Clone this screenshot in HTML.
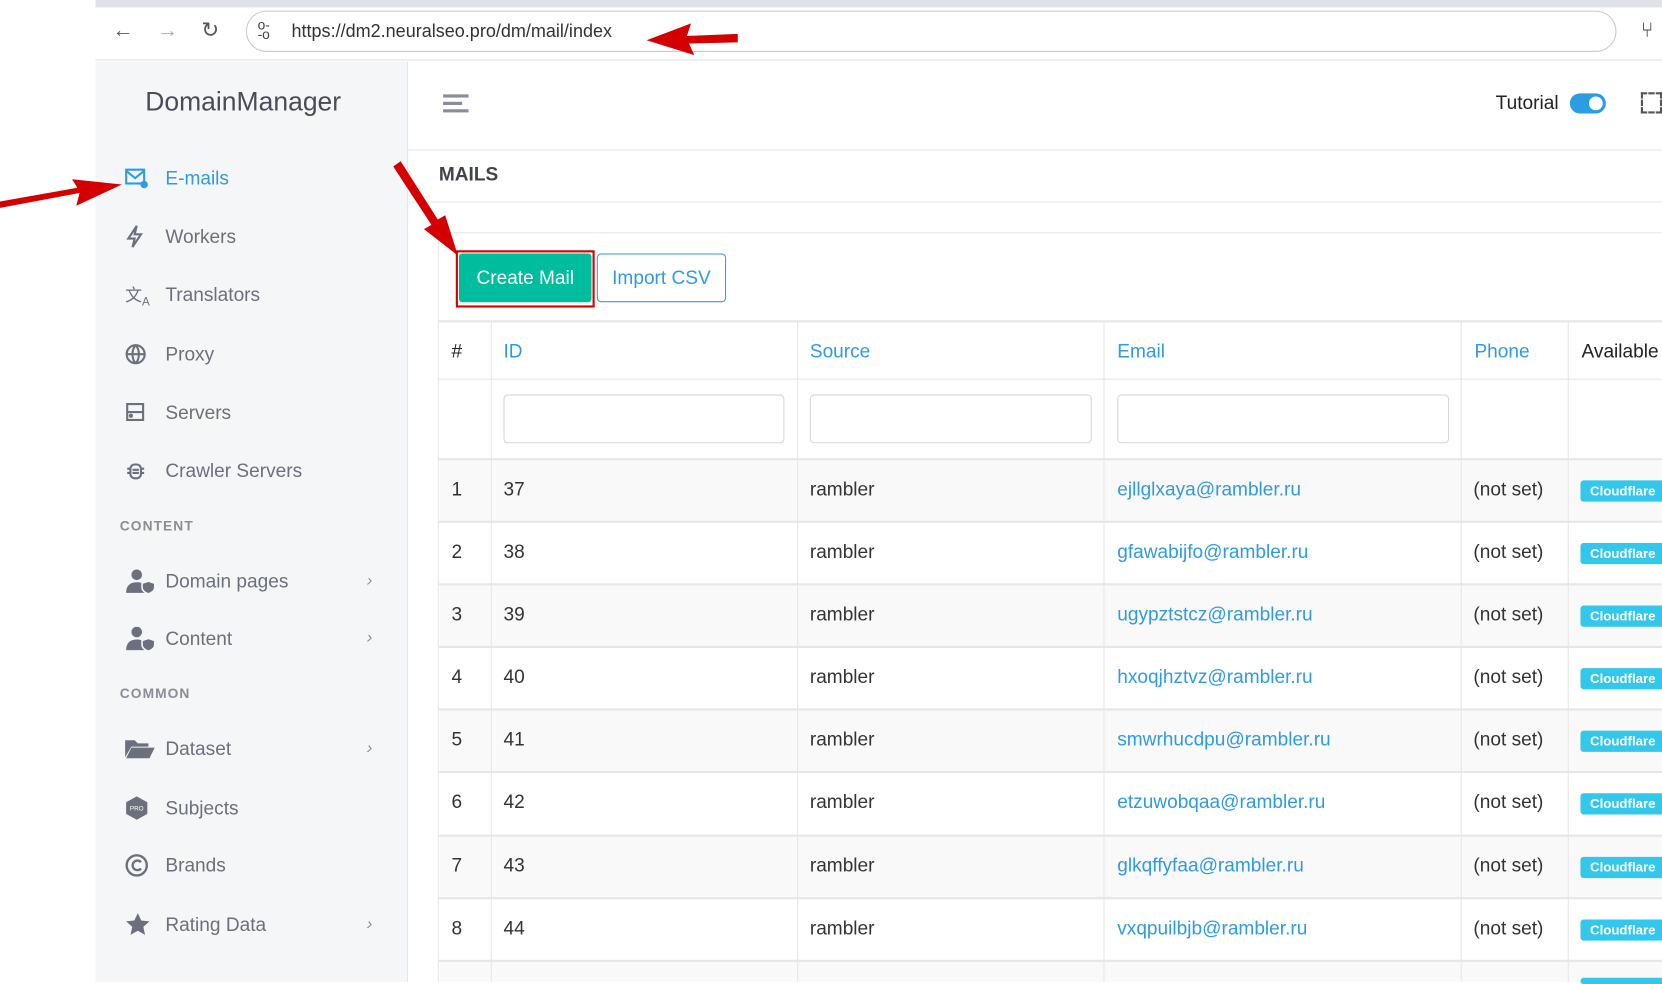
<!DOCTYPE html>
<html><head><meta charset="utf-8">
<style>
*{box-sizing:border-box;margin:0;padding:0}
html,body{width:1662px;height:982px;overflow:hidden;background:#fff}
#w{position:absolute;left:0;top:0;width:1568px;height:926px;transform:scale(1.06,1.0605);transform-origin:0 0;font-family:"Liberation Sans","DejaVu Sans",sans-serif;}
.a{position:absolute}
.side .it{position:absolute;left:0;width:294px;height:40px;display:flex;align-items:center;font-size:18px;color:#6c6f7d}
.side .it svg{position:absolute;left:28px}
.side .it span{position:absolute;left:66px}
.side .chev{position:absolute;left:256px;font-size:16px;color:#8a8d99}
.sec{position:absolute;left:23px;font-size:13px;letter-spacing:1px;color:#8a8d99;font-weight:bold}
.vl{position:absolute;width:1px;background:#e6e6e6}
.hl{position:absolute;height:1px;background:#e6e6e6}
.row{position:absolute;left:415px;width:1153px;height:59px}
.row div{position:absolute;top:18px;font-size:18px;color:#333}
.row div.b{background:#33c7ec;color:#fff;font-size:12.5px;font-weight:bold;padding:3px 9px;border-radius:3px;top:20px;}
.inp{position:absolute;height:46px;border:1px solid #d3d6dc;border-radius:4px;top:372px}
</style></head><body><div id="w">
<!-- browser -->
<div class="a" style="left:90px;top:0;width:1478px;height:9px;background:#dfe3e8"></div>
<div class="a" style="left:90px;top:7px;width:1478px;height:50px;background:#fff;border-bottom:1px solid #e2e2e2"></div>
<div class="a" style="left:106px;top:18px;font-size:20px;color:#555">&#8592;</div>
<div class="a" style="left:148px;top:18px;font-size:20px;color:#aaa">&#8594;</div>
<div class="a" style="left:190px;top:16px;font-size:20px;color:#555">&#8635;</div>
<div class="a" style="left:232px;top:10px;width:1293px;height:39px;border:1px solid #c9c9c9;border-radius:20px"></div>
<div class="a" style="left:243px;top:19px;font-size:13px;color:#444;line-height:9px">o-<br>-o</div>
<div class="a" style="left:275px;top:20px;font-size:17px;color:#333">https://dm2.neuralseo.pro/dm/mail/index</div>
<div class="a" style="left:1548px;top:18px;font-size:20px;color:#2d4a63">&#x2442;</div>
<!-- sidebar -->
<div class="a side" style="left:90px;top:58px;width:295px;height:868px;background:#f5f6f8;border-right:1px solid #e3e4e8">
 <div class="a" style="left:47px;top:24px;font-size:25px;color:#4a4d57">DomainManager</div>
 <div class="it" style="top:90px;color:#2f9be3"><svg width="22" height="20" viewBox="0 0 22 20" fill="none" stroke="#2f9be3" stroke-width="2"><rect x="1" y="2" width="17" height="13"/><path d="M1 3l8.5 7 8.5-7"/><circle cx="18" cy="16" r="2.5" fill="#2f9be3"/></svg><span>E-mails</span></div>
 <div class="it" style="top:145px"><svg width="20" height="22" viewBox="0 0 20 22" fill="none" stroke="#6c6f7d" stroke-width="2"><path d="M11 1L3 13h6l-2 8 8-12h-6z"/></svg><span>Workers</span></div>
 <div class="it" style="top:200px"><span style="left:28px;font-size:16px">文<sub style="font-size:11px">A</sub></span><span>Translators</span></div>
 <div class="it" style="top:256px"><svg width="20" height="20" viewBox="0 0 20 20" fill="none" stroke="#6c6f7d" stroke-width="2"><circle cx="10" cy="10" r="8.5"/><path d="M1.5 10h17M10 1.5c-4 4-4 13 0 17M10 1.5c4 4 4 13 0 17"/></svg><span>Proxy</span></div>
 <div class="it" style="top:311px"><svg width="20" height="20" viewBox="0 0 20 20" fill="none" stroke="#6c6f7d" stroke-width="2"><rect x="2" y="2" width="15" height="15"/><path d="M2 9.5h15"/><circle cx="5.5" cy="13" r="1" fill="#6c6f7d"/></svg><span>Servers</span></div>
 <div class="it" style="top:366px"><svg width="20" height="20" viewBox="0 0 20 20" fill="none" stroke="#6c6f7d" stroke-width="2"><rect x="5" y="4" width="10" height="13" rx="4"/><path d="M7 9h6M7 12h6M2 8h3M2 12h3M15 8h3M15 12h3"/></svg><span>Crawler Servers</span></div>
 <div class="sec" style="top:430px">CONTENT</div>
 <div class="it" style="top:470px"><svg width="30" height="24" viewBox="0 0 30 24" fill="#6c6f7d"><circle cx="11" cy="6" r="5"/><path d="M1 23c0-7 4-10 10-10 4 0 7 1 9 4v6z"/><path d="M22 12l6 2v4c0 3-3 5-6 6-3-1-6-3-6-6v-4z" stroke="#f5f6f8" stroke-width="1.5"/></svg><span>Domain pages</span><i class="chev">&#8250;</i></div>
 <div class="it" style="top:524px"><svg width="30" height="24" viewBox="0 0 30 24" fill="#6c6f7d"><circle cx="11" cy="6" r="5"/><path d="M1 23c0-7 4-10 10-10 4 0 7 1 9 4v6z"/><path d="M22 12l6 2v4c0 3-3 5-6 6-3-1-6-3-6-6v-4z" stroke="#f5f6f8" stroke-width="1.5"/></svg><span>Content</span><i class="chev">&#8250;</i></div>
 <div class="sec" style="top:588px">COMMON</div>
 <div class="it" style="top:628px"><svg width="28" height="20" viewBox="0 0 28 20" fill="#6c6f7d"><path d="M0 2h9l3 3h10v3H6L0 18z"/><path d="M6 9h22l-5 10H1z"/></svg><span>Dataset</span><i class="chev">&#8250;</i></div>
 <div class="it" style="top:684px"><svg width="22" height="24" viewBox="0 0 22 24"><path d="M11 1l10 5.5v11L11 23 1 17.5v-11z" fill="#6c6f7d"/><text x="11" y="14.5" font-size="6" fill="#fff" text-anchor="middle" font-family="Liberation Sans">PRO</text></svg><span>Subjects</span></div>
 <div class="it" style="top:738px"><svg width="22" height="22" viewBox="0 0 22 22" fill="none" stroke="#6c6f7d" stroke-width="2.2"><circle cx="11" cy="11" r="9.5"/><path d="M15 8a4.5 4.5 0 1 0 0 6"/></svg><span>Brands</span></div>
 <div class="it" style="top:794px"><svg width="24" height="24" viewBox="0 0 24 24" fill="#6c6f7d"><path d="M12 1l3.3 7 7.7.8-5.8 5.2 1.7 7.6L12 17.7 5.1 21.6l1.7-7.6L1 8.8 8.7 8z"/></svg><span>Rating Data</span><i class="chev">&#8250;</i></div>
</div>
<!-- header -->
<div class="hl" style="left:385px;top:141px;width:1183px"></div>
<div class="a" style="left:418px;top:89px;width:24px;height:3px;background:#8a8d99"></div>
<div class="a" style="left:418px;top:96px;width:18px;height:3px;background:#8a8d99"></div>
<div class="a" style="left:418px;top:103px;width:24px;height:3px;background:#8a8d99"></div>
<div class="a" style="left:1411px;top:87px;font-size:18px;color:#222">Tutorial</div>
<div class="a" style="left:1481px;top:88px;width:34px;height:19px;border-radius:10px;background:#2a9de3"><div class="a" style="right:3px;top:3px;width:13px;height:13px;border-radius:50%;background:#fff"></div></div>
<div class="a" style="left:1548px;top:87px;width:20px;height:20px;border:2px dashed #555;border-width:2px"></div>
<div class="a" style="left:414px;top:154px;font-size:18px;font-weight:bold;color:#3f434d">MAILS</div>
<div class="hl" style="left:385px;top:190px;width:1183px"></div>
<div class="hl" style="left:414px;top:219px;width:1154px"></div>
<div class="vl" style="left:413px;top:219px;height:707px"></div>
<!-- buttons -->
<div class="a" style="left:430px;top:236px;width:131px;height:54px;border:2px solid #d50000"></div>
<div class="a" style="left:433px;top:239px;width:125px;height:46px;background:#00bd9d;border-radius:3px;color:#fff;font-size:18px;text-align:center;line-height:46px">Create Mail</div>
<div class="a" style="left:563px;top:239px;width:122px;height:46px;border:1px solid #2f9be3;border-radius:4px;color:#2f9be3;font-size:18px;text-align:center;line-height:44px">Import CSV</div>
<!-- table -->
<div class="a" style="left:414px;top:302px;width:1154px;height:2px;background:#e6e6e6"></div>
<div class="a" style="left:415px;top:433px;width:1153px;height:59px;background:#f9f9f9"></div>
<div class="a" style="left:415px;top:551px;width:1153px;height:59px;background:#f9f9f9"></div>
<div class="a" style="left:415px;top:669px;width:1153px;height:59px;background:#f9f9f9"></div>
<div class="a" style="left:415px;top:788px;width:1153px;height:59px;background:#f9f9f9"></div>
<div class="a" style="left:415px;top:906px;width:1153px;height:20px;background:#f9f9f9"></div>
<div class="vl" style="left:463px;top:304px;height:622px"></div>
<div class="vl" style="left:752px;top:304px;height:622px"></div>
<div class="vl" style="left:1041px;top:304px;height:622px"></div>
<div class="vl" style="left:1378px;top:304px;height:622px"></div>
<div class="vl" style="left:1479px;top:304px;height:622px"></div>
<div class="hl" style="left:414px;top:357px;width:1154px"></div>
<div class="hl" style="left:414px;top:432px;width:1154px;height:2px"></div>
<div class="hl" style="left:414px;top:491px;width:1154px;height:2px"></div>
<div class="hl" style="left:414px;top:550px;width:1154px;height:2px"></div>
<div class="hl" style="left:414px;top:609px;width:1154px;height:2px"></div>
<div class="hl" style="left:414px;top:668px;width:1154px;height:2px"></div>
<div class="hl" style="left:414px;top:727px;width:1154px;height:2px"></div>
<div class="hl" style="left:414px;top:787px;width:1154px;height:2px"></div>
<div class="hl" style="left:414px;top:846px;width:1154px;height:2px"></div>
<div class="hl" style="left:414px;top:905px;width:1154px;height:2px"></div>
<div class="a" style="left:426px;top:321px;font-size:18px;color:#222">#</div>
<div class="a" style="left:475px;top:321px;font-size:18px;color:#2f9be3">ID</div>
<div class="a" style="left:764px;top:321px;font-size:18px;color:#2f9be3">Source</div>
<div class="a" style="left:1054px;top:321px;font-size:18px;color:#2f9be3">Email</div>
<div class="a" style="left:1391px;top:321px;font-size:18px;color:#2f9be3">Phone</div>
<div class="a" style="left:1492px;top:321px;font-size:18px;color:#222">Available</div>
<div class="inp" style="left:475px;width:265px"></div>
<div class="inp" style="left:764px;width:266px"></div>
<div class="inp" style="left:1054px;width:313px"></div>
<div id="rows"></div>
<div class="a" style="left:1491px;top:922px;width:80px;height:6px;background:#33c7ec;border-radius:3px"></div>
<!-- red arrows -->
<svg class="a" style="left:0;top:0" width="1568" height="926">
<g fill="#d40000">
<path d="M696 32 L648 34 L652 22 L610 38 L655 52 L650 41 L696 40z"/>
<path d="M0 190 L75 176 L72 188 L115 168 L68 163 L73 171 L0 184z" transform="translate(0,6)"/>
<path d="M371 157 L378 152 L413 207 L420 203 L432 241 L400 216 L407 212z"/>
</g></svg>
</div>
<script>
var d=[["1","37","ejllglxaya"],["2","38","gfawabijfo"],["3","39","ugypztstcz"],["4","40","hxoqjhztvz"],["5","41","smwrhucdpu"],["6","42","etzuwobqaa"],["7","43","glkqffyfaa"],["8","44","vxqpuilbjb"]];
var tops=[433,492,551,610,669,728,788,847],h="";
d.forEach(function(r,i){h+='<div class="row" style="top:'+tops[i]+'px"><div style="left:11px">'+r[0]+'</div><div style="left:60px">'+r[1]+'</div><div style="left:349px">rambler</div><div style="left:639px;color:#2f9be3">'+r[2]+'@rambler.ru</div><div style="left:975px">(not set)</div><div class="b" style="left:1076px">Cloudflare</div></div>';});
document.getElementById("rows").innerHTML=h;
</script>
</body></html>
